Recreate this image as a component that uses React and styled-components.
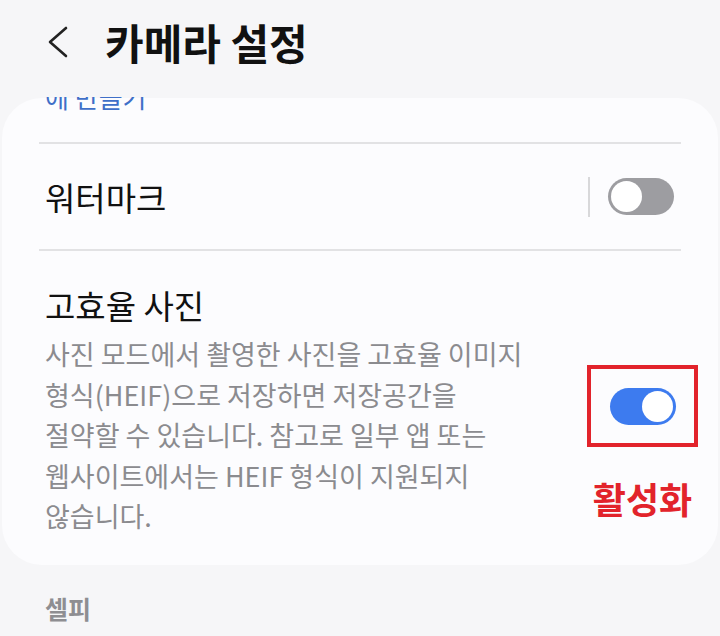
import React from "react";
import styled, { createGlobalStyle } from "styled-components";

const GlobalStyle = createGlobalStyle`
  html, body { margin: 0; padding: 0; }
  body {
    background: #f6f6f8;
    font-family: "Noto Sans CJK KR", "Noto Sans", sans-serif;
    width: 720px;
    height: 636px;
    overflow: hidden;
  }
`;

const Page = styled.div`
  display: flex;
  flex-direction: column;
  width: 720px;
  height: 636px;
  overflow: hidden;
`;

const Header = styled.header`
  position: relative;
  z-index: 2;
  height: 97px;
  flex: none;
  background: #f6f6f8;
  display: flex;
  align-items: center;
  padding: 0 0 14px 44px;
  box-sizing: border-box;
  gap: 33px;
`;

const BackButton = styled.div`
  width: 28px;
  height: 40px;
  display: flex;
  align-items: center;
  justify-content: center;
`;

const Title = styled.h1`
  margin: 0;
  font-size: 42px;
  line-height: 50px;
  font-weight: 700;
  color: #111;
`;

const Card = styled.section`
  margin: 1px 2px 0;
  background: #fcfcfe;
  border-radius: 40px;
  padding: 0 37px;
  display: flex;
  flex-direction: column;
  flex: none;
`;

const CutText = styled.div`
  margin: -16px 0 0 6px;
  height: 60px;
  font-size: 26px;
  line-height: 30px;
  color: #3f6fc8;
`;

const Divider = styled.div`
  height: 2px;
  background: #e2e2e4;
`;

const Row = styled.div`
  display: flex;
  align-items: ${(p) => (p.$top ? "flex-start" : "center")};
  justify-content: space-between;
  min-height: ${(p) => p.$h || "auto"};
  padding: ${(p) => p.$pad || "0"};
`;

const TextCol = styled.div`
  display: flex;
  flex-direction: column;
  padding-left: 6px;
`;

const ItemTitle = styled.div`
  font-size: 33px;
  line-height: 44px;
  color: #111;
`;

const Desc = styled.div`
  font-size: 27px;
  line-height: 40.6px;
  color: #8b8b8f;
  margin-top: 7px;
  white-space: nowrap;
`;

const SwitchArea = styled.div`
  display: flex;
  align-items: center;
  gap: 18px;
`;

const VLine = styled.div`
  width: 2px;
  height: 40px;
  background: #d8d8da;
`;

const Switch = styled.div`
  width: 66px;
  height: 37px;
  border-radius: 19px;
  background: ${(p) => (p.$on ? "#3d7bef" : "#9d9da1")};
  display: flex;
  align-items: center;
  justify-content: ${(p) => (p.$on ? "flex-end" : "flex-start")};
  padding: 0 3px;
  box-sizing: border-box;
  margin-right: ${(p) => p.$mr || "0"};
`;

const Knob = styled.div`
  width: 31px;
  height: 31px;
  border-radius: 50%;
  background: #fff;
`;

const Highlight = styled.div`
  display: flex;
  flex-direction: column;
  align-items: center;
  margin-top: 82px;
  margin-right: -17px;
`;

const RedBox = styled.div`
  width: 111px;
  height: 82px;
  box-sizing: border-box;
  border: 4px solid #e2232b;
  display: flex;
  align-items: center;
  justify-content: center;
`;

const RedLabel = styled.div`
  margin-top: 29px;
  font-size: 36px;
  font-weight: 700;
  color: #e2232b;
  line-height: 44px;
`;

const SectionLabel = styled.div`
  padding: 26px 0 0 45px;
  font-size: 25px;
  line-height: 34px;
  font-weight: 700;
  color: #8e8e92;
`;

export default function App() {
  return (
    <Page>
      <GlobalStyle />
      <Header>
        <BackButton>
          <svg width="24" height="32" viewBox="0 0 24 32" fill="none">
            <path d="M20 2 L4 16 L20 30" stroke="#222" strokeWidth="2.6" strokeLinecap="round" strokeLinejoin="round" />
          </svg>
        </BackButton>
        <Title>카메라 설정</Title>
      </Header>
      <Card>
        <CutText>에 만들기</CutText>
        <Divider />
        <Row $h="105px">
          <TextCol>
            <ItemTitle>워터마크</ItemTitle>
          </TextCol>
          <SwitchArea>
            <VLine />
            <Switch $mr="7px">
              <Knob />
            </Switch>
          </SwitchArea>
        </Row>
        <Divider />
        <Row $top $pad="32px 0 28px">
          <TextCol>
            <ItemTitle>고효율 사진</ItemTitle>
            <Desc>
              사진 모드에서 촬영한 사진을 고효율 이미지
              <br />
              형식(HEIF)으로 저장하면 저장공간을
              <br />
              절약할 수 있습니다. 참고로 일부 앱 또는
              <br />
              웹사이트에서는 HEIF 형식이 지원되지
              <br />
              않습니다.
            </Desc>
          </TextCol>
          <Highlight>
            <RedBox>
              <Switch $on>
                <Knob />
              </Switch>
            </RedBox>
            <RedLabel>활성화</RedLabel>
          </Highlight>
        </Row>
      </Card>
      <SectionLabel>셀피</SectionLabel>
    </Page>
  );
}
